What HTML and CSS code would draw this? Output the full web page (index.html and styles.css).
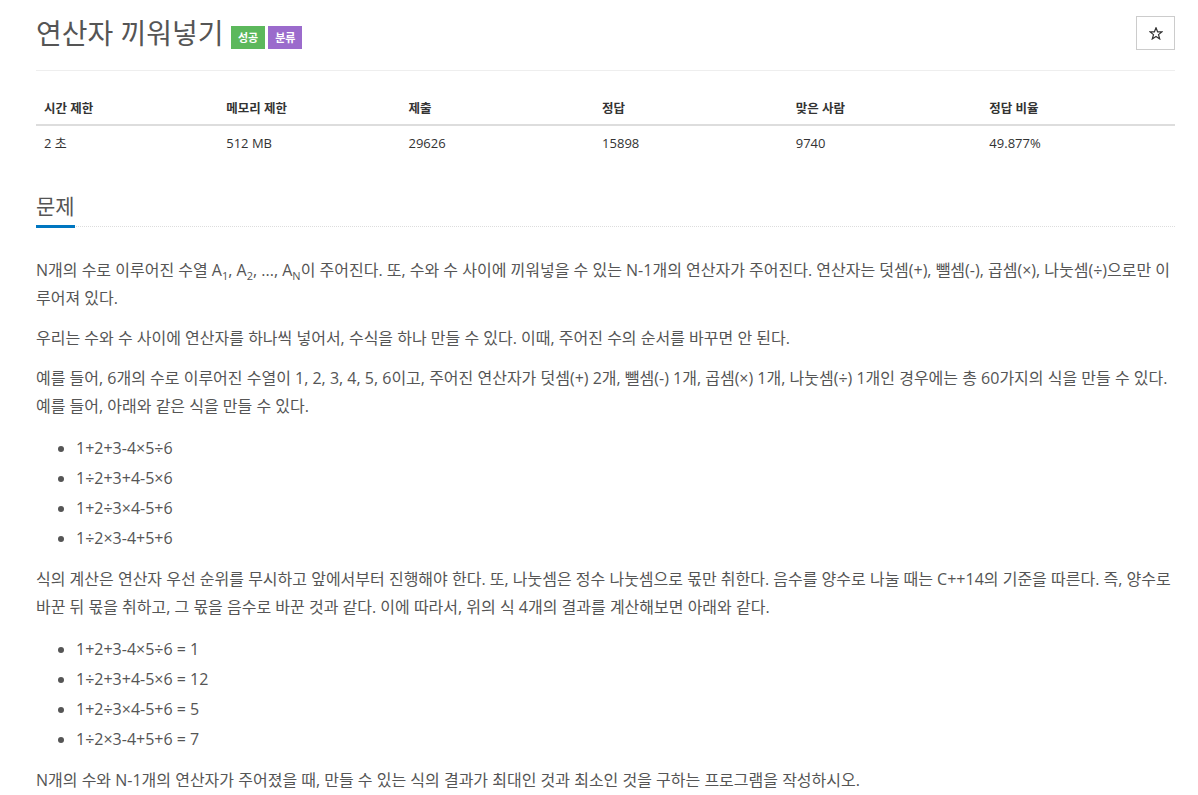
FILE: index.html
```html
<!doctype html>
<html lang="ko">
  <head>
    <meta charset="UTF-8" />
    <title>연산자 끼워넣기</title>
    <link rel="stylesheet" href="styles.css">
  </head>
  <body>
    <div class="container">
      <div class="page-header">
        <h1 class="title">
          연산자 끼워넣기
          <span class="label label-success">성공</span><span class="label label-purple">분류</span>
        </h1>
        <button class="star-btn" type="button" aria-label="즐겨찾기">
          <svg width="14" height="13" viewBox="0 0 14 13">
            <polygon points="7,0.8 8.6,4.8 12.9,4.9 9.5,7.6 10.7,11.9 7,9.4 3.3,11.9 4.5,7.6 1.1,4.9 5.4,4.8"
              fill="none" stroke="#333" stroke-width="1.2" stroke-linejoin="miter" />
          </svg>
        </button>
      </div>

      <table class="problem-info">
        <thead>
          <tr>
            <th>시간 제한</th>
            <th>메모리 제한</th>
            <th>제출</th>
            <th>정답</th>
            <th>맞은 사람</th>
            <th>정답 비율</th>
          </tr>
        </thead>
        <tbody>
          <tr>
            <td>2 초</td>
            <td>512 MB</td>
            <td>29626</td>
            <td>15898</td>
            <td>9740</td>
            <td>49.877%</td>
          </tr>
        </tbody>
      </table>

      <section class="problem-section">
        <div class="headline"><h2>문제</h2></div>
        <div class="problem-text">
          <p>N개의 수로 이루어진 수열 A<sub>1</sub>, A<sub>2</sub>, ..., A<sub>N</sub>이 주어진다. 또, 수와 수 사이에 끼워넣을 수 있는 N-1개의 연산자가 주어진다. 연산자는 덧셈(+), 뺄셈(-), 곱셈(×), 나눗셈(÷)으로만 이루어져 있다.</p>
          <p>우리는 수와 수 사이에 연산자를 하나씩 넣어서, 수식을 하나 만들 수 있다. 이때, 주어진 수의 순서를 바꾸면 안 된다.</p>
          <p>예를 들어, 6개의 수로 이루어진 수열이 1, 2, 3, 4, 5, 6이고, 주어진 연산자가 덧셈(+) 2개, 뺄셈(-) 1개, 곱셈(×) 1개, 나눗셈(÷) 1개인 경우에는 총 60가지의 식을 만들 수 있다. 예를 들어, 아래와 같은 식을 만들 수 있다.</p>
          <ul>
            <li>1+2+3-4×5÷6</li>
            <li>1÷2+3+4-5×6</li>
            <li>1+2÷3×4-5+6</li>
            <li>1÷2×3-4+5+6</li>
          </ul>
          <p>식의 계산은 연산자 우선 순위를 무시하고 앞에서부터 진행해야 한다. 또, 나눗셈은 정수 나눗셈으로 몫만 취한다. 음수를 양수로 나눌 때는 C++14의 기준을 따른다. 즉, 양수로 바꾼 뒤 몫을 취하고, 그 몫을 음수로 바꾼 것과 같다. 이에 따라서, 위의 식 4개의 결과를 계산해보면 아래와 같다.</p>
          <ul>
            <li>1+2+3-4×5÷6 = 1</li>
            <li>1÷2+3+4-5×6 = 12</li>
            <li>1+2÷3×4-5+6 = 5</li>
            <li>1÷2×3-4+5+6 = 7</li>
          </ul>
          <p>N개의 수와 N-1개의 연산자가 주어졌을 때, 만들 수 있는 식의 결과가 최대인 것과 최소인 것을 구하는 프로그램을 작성하시오.</p>
        </div>
      </section>
    </div>
  </body>
</html>
```

FILE: styles.css
```css
body {
  margin: 0;
  font-family: "Open Sans", "Noto Sans CJK KR", sans-serif;
  color: #333;
  background: #fff;
}

.container {
  width: 1139px;
  margin-left: 36px;
}

/* 제목 영역 */
.page-header {
  display: flex;
  justify-content: space-between;
  align-items: flex-start;
  padding-top: 16px;
  padding-bottom: 20px;
  border-bottom: 1px solid #eee;
}

.title {
  margin: 0;
  font-size: 28px;
  font-weight: 400;
  line-height: 34px;
  color: #555;
}

.label {
  display: inline-block;
  vertical-align: 2px;
  height: 23px;
  line-height: 23px;
  padding: 0 7px;
  margin-left: 3px;
  font-size: 11px;
  font-weight: 700;
  color: #fff;
}

.label-success {
  margin-left: 0;
  background: #5cb85c;
}

.label-purple {
  background: #9b6bcc;
}

.star-btn {
  display: flex;
  align-items: center;
  justify-content: center;
  width: 39px;
  height: 34px;
  padding: 0;
  border: 1px solid #ccc;
  background: #fff;
  cursor: pointer;
}

/* 제한 정보 표 */
.problem-info {
  width: 100%;
  margin-top: 17px;
  border-collapse: collapse;
  font-size: 13px;
}

.problem-info th,
.problem-info td {
  text-align: left;
  padding: 8px;
  line-height: 20px;
}

.problem-info th:nth-child(1),
.problem-info th:nth-child(2) {
  width: 16%;
}

.problem-info th:nth-child(3),
.problem-info th:nth-child(4),
.problem-info th:nth-child(5) {
  width: 17%;
}

.problem-info th {
  padding-top: 11px;
  padding-bottom: 5px;
  font-size: 12.5px;
  font-weight: 700;
  border-bottom: 2px solid #ddd;
}

.problem-info td {
  padding-top: 7px;
}

/* 문제 본문 */
.problem-section {
  margin-top: 30px;
}

.headline {
  border-bottom: 1px dotted #ddd;
  margin-bottom: 29px;
}

.headline h2 {
  display: inline-block;
  margin: 0 0 -2px;
  padding-bottom: 4px;
  font-size: 21px;
  font-weight: 400;
  line-height: 30px;
  color: #555;
  border-bottom: 3px solid #0076c0;
}

.problem-text {
  font-size: 16px;
  color: #555;
}

.problem-text p {
  margin: 0 0 12px;
  line-height: 28px;
}

.problem-text sub {
  line-height: 0;
  font-size: 11px;
}

.problem-text ul {
  margin: 13px 0 12px;
  padding-left: 40px;
}

.problem-text li {
  line-height: 30px;
}
```
